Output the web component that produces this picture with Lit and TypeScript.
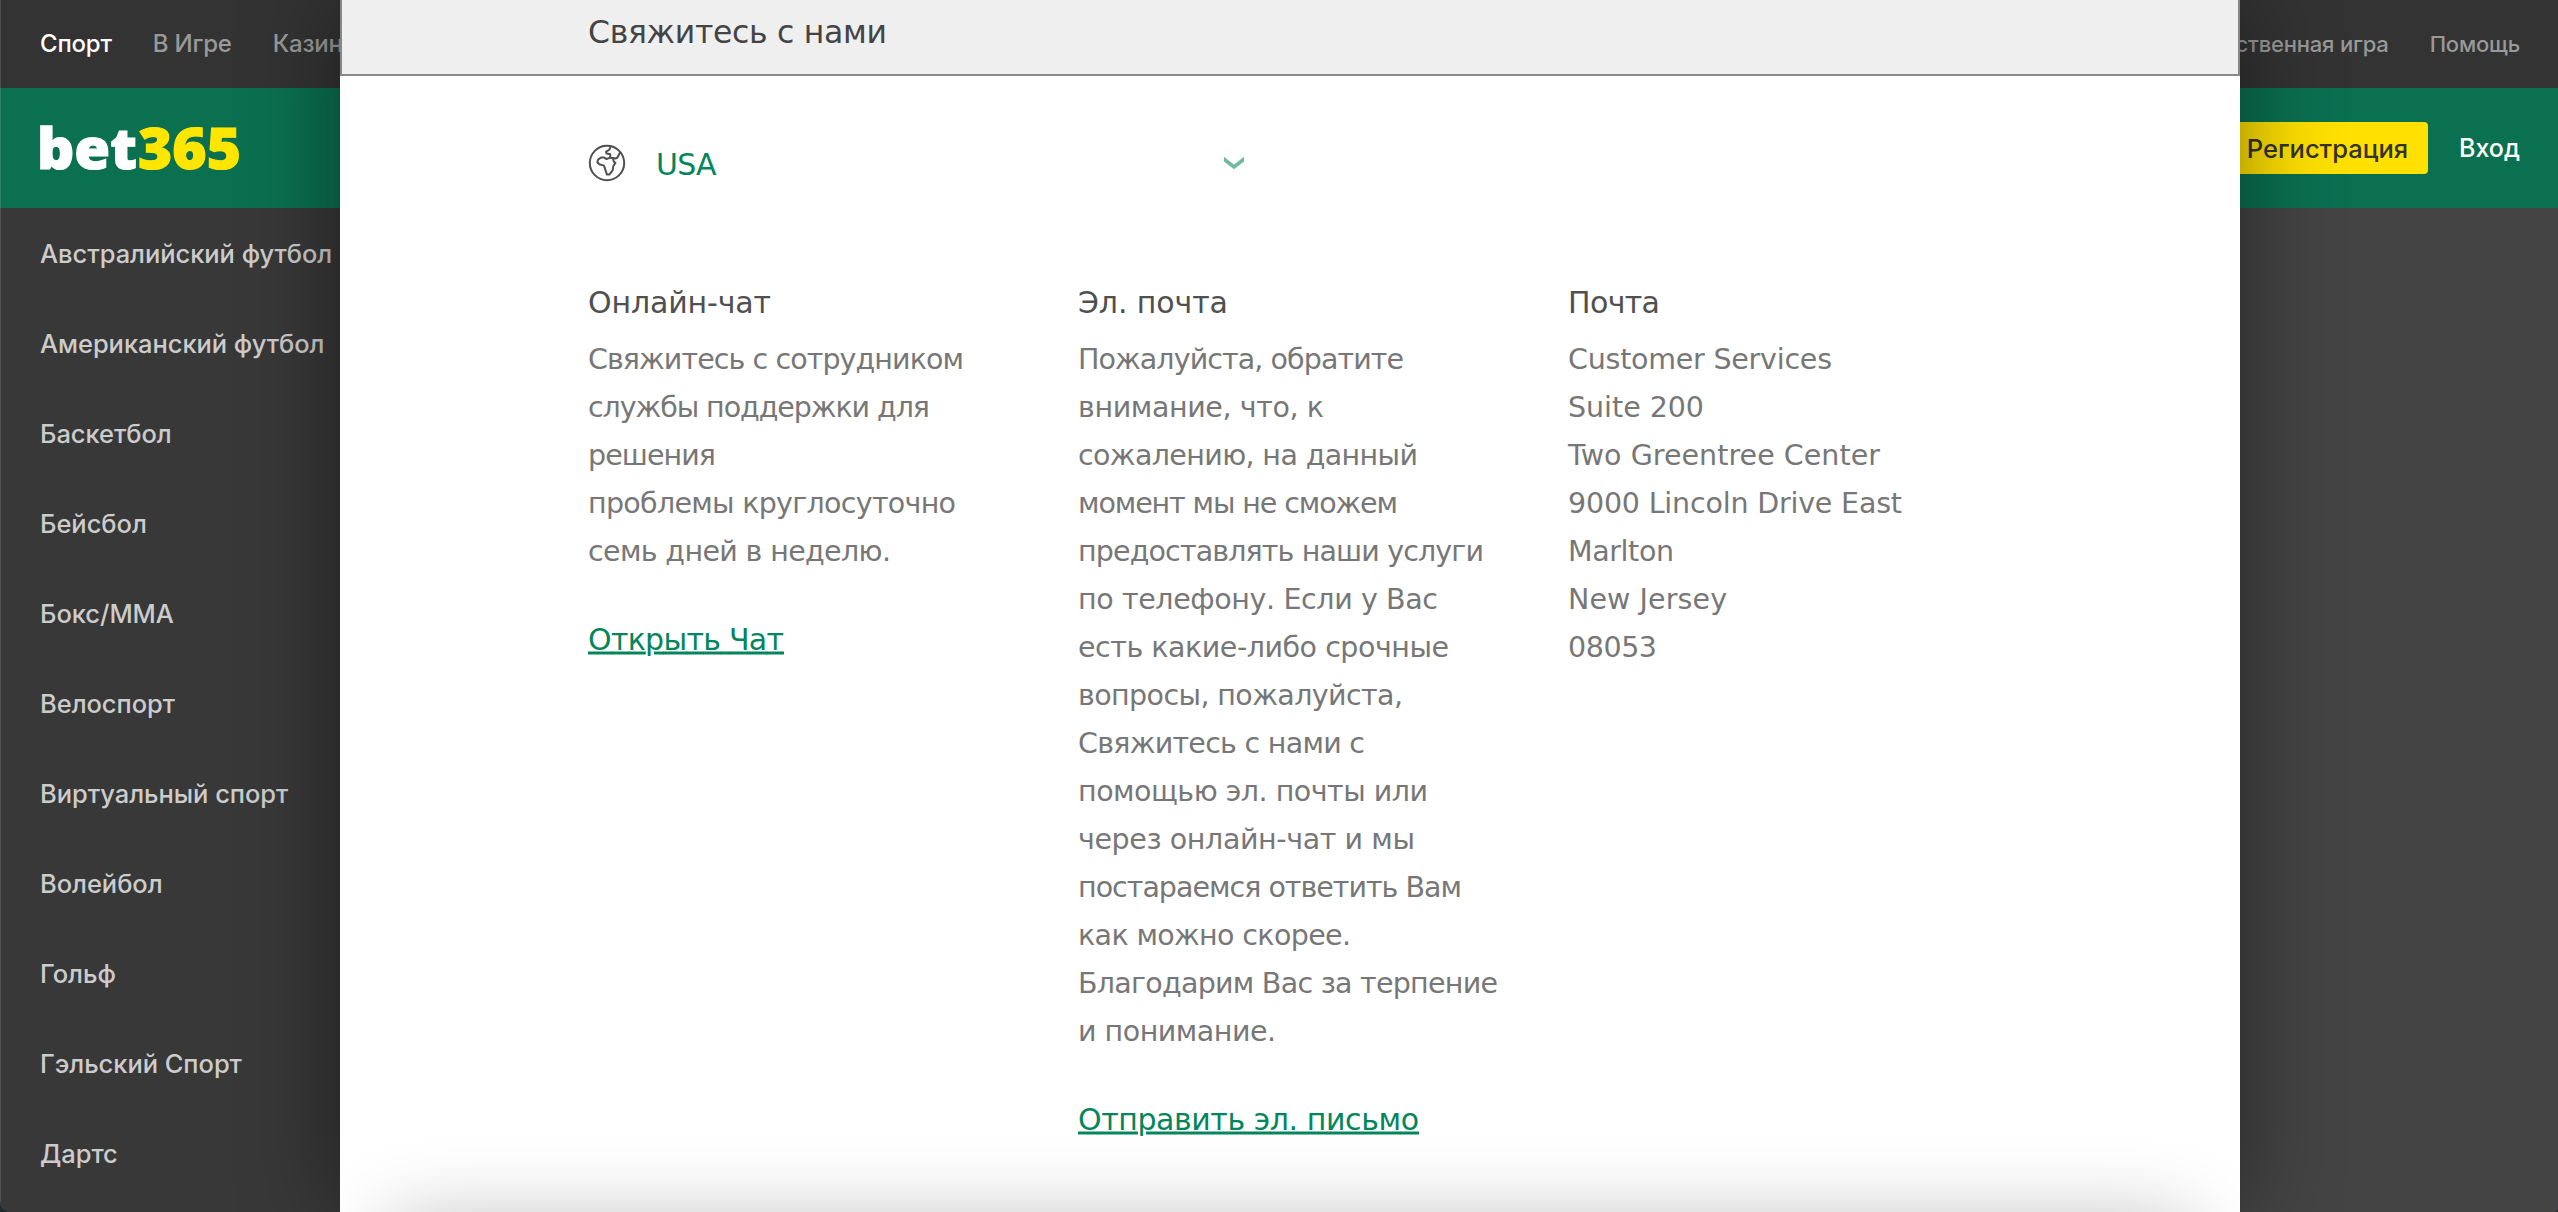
import { LitElement, html, svg, css } from "lit";
import { customElement } from "lit/decorators.js";

interface Line { text: string; width: number; }
interface Column { title: string; titleWidth: number; lines: Line[]; link?: string; linkWidth?: number; }

const l = (text: string, width: number): Line => ({ text, width });

const COLUMNS: Column[] = [
  {
    title: "Онлайн-чат", titleWidth: 183,
    lines: [
      l("Свяжитесь с сотрудником", 376), l("службы поддержки для", 342), l("решения", 128),
      l("проблемы круглосуточно", 368), l("семь дней в неделю.", 303),
    ],
    link: "Открыть Чат", linkWidth: 196,
  },
  {
    title: "Эл. почта", titleWidth: 150,
    lines: [
      l("Пожалуйста, обратите", 326), l("внимание, что, к", 246), l("сожалению, на данный", 340),
      l("момент мы не сможем", 320), l("предоставлять наши услуги", 406), l("по телефону. Если у Вас", 360),
      l("есть какие-либо срочные", 371), l("вопросы, пожалуйста,", 325), l("Свяжитесь с нами с", 287),
      l("помощью эл. почты или", 350), l("через онлайн-чат и мы", 337), l("постараемся ответить Вам", 384),
      l("как можно скорее.", 273), l("Благодарим Вас за терпение", 420), l("и понимание.", 198),
    ],
    link: "Отправить эл. письмо", linkWidth: 341,
  },
  {
    title: "Почта", titleWidth: 92,
    lines: [
      l("Customer Services", 264), l("Suite 200", 136), l("Two Greentree Center", 312),
      l("9000 Lincoln Drive East", 334), l("Marlton", 106), l("New Jersey", 159), l("08053", 89),
    ],
  },
];

const SPORTS = ["Австралийский футбол", "Американский футбол", "Баскетбол", "Бейсбол", "Бокс/ММА",
  "Велоспорт", "Виртуальный спорт", "Волейбол", "Гольф", "Гэльский Спорт", "Дартс"];

@customElement("app-root")
export class AppRoot extends LitElement {
  static styles = css`
    :host { display: block; position: relative; width: 100%; height: 1212px; overflow: hidden; background: #1d2b2b; font-family: Inter, "Noto Sans", sans-serif; }
    .page { display: flex; flex-direction: column; height: 1212px; background: #444; border-radius: 0 0 4px 10px; overflow: hidden; }
    .edge { position: absolute; left: 0; top: 0; bottom: 10px; width: 1px; background: rgba(255, 255, 255, 0.13); }
    .nav { height: 88px; flex: none; background: #333; display: flex; justify-content: space-between; align-items: center; padding: 0 38px 0 40px; color: #999; box-sizing: border-box; white-space: nowrap; }
    .tabs { display: flex; gap: 41px; font-size: 24px; letter-spacing: -0.2px; font-weight: 450; padding-bottom: 1px; }
    .active { color: #fff; font-weight: 500; }
    .help { display: flex; gap: 41px; font-size: 22px; font-weight: 450; letter-spacing: -0.2px; }
    .bar { height: 120px; flex: none; background: #0a7050; display: flex; justify-content: space-between; align-items: center; padding: 0 38px 0 40px; }
    .logo { width: 202px; height: 60px; display: block; overflow: visible; font-family: "Noto Sans", sans-serif; font-weight: 900; font-size: 56px; stroke-width: 1.2px; }
    .account { display: flex; align-items: center; gap: 31px; }
    .join { height: 52px; width: 210px; box-sizing: border-box; padding-right: 20px; border-radius: 4px; background: #ffe000; color: #333; font-size: 25.500px; font-weight: 450; display: flex; align-items: center; justify-content: flex-end; }
    .login { color: #fff; font-weight: 500; font-size: 25px; }
    .sidebar { flex: 1; width: 400px; min-height: 0; background: #383838; overflow: hidden; box-sizing: border-box; }
    .sport { height: 90px; display: flex; align-items: center; padding-left: 40px; color: #ccc; font-size: 25.500px; font-weight: 450; letter-spacing: -0.05px; white-space: nowrap; }
    .dialog { position: absolute; left: 340px; top: 0; width: 1900px; height: 1212px; background: #fff; box-shadow: 0 0 90px rgba(0, 0, 0, 0.45); font-family: "DejaVu Sans", Verdana, sans-serif; color: #505050; }
    .head { height: 76px; box-sizing: border-box; border: 2px solid #888; border-top: 0; background: #efefef; padding-left: 246px; display: flex; align-items: center; padding-bottom: 11px; font-size: 31.500px; color: #444; }
    .body { padding: 65px 170px 0 248px; }
    .country { height: 44px; display: flex; align-items: center; width: 656px; }
    .globe { width: 38px; height: 38px; margin-right: 30px; }
    .name { flex: 1; color: #05855b; font-size: 30px; padding-top: 3px; letter-spacing: -0.8px; }
    .chevron { width: 20px; height: 13px; overflow: hidden; margin-top: 1px; }
    .columns { display: grid; grid-template-columns: 490px 490px 440px; margin-top: 93px; }
    .title { height: 50px; line-height: 50px; font-size: 30px; }
    .text { margin-top: 6px; color: #777; font-size: 28.500px; }
    .line { height: 48px; line-height: 48px; white-space: nowrap; }
    .link { margin-top: 41px; height: 50px; font-size: 30px; color: #05855b; }
    svg.run { display: block; overflow: visible; height: 48px; }
    .under { text-decoration: underline; text-decoration-thickness: 2px; text-underline-offset: 3px; }
    .fade { position: absolute; left: 0; right: 0; bottom: 0; height: 80px; overflow: hidden; }
    .fade-shape { position: absolute; left: 50px; right: 50px; top: 88px; height: 80px; box-shadow: 0 0 80px rgba(0, 0, 0, 0.25); }
  `;

  private run(text: string, width: number, cls = "") {
    return html`<svg class="run" width=${width}>
      ${svg`<text class=${cls} x="0" y="34.500" fill="currentColor" textLength=${width}>${text}</text>`}
    </svg>`;
  }

  render() {
    return html`
      <div class="page">
        <div class="nav">
          <div class="tabs"><span class="active">Спорт</span><span>В Игре</span><span>Казино</span></div>
          <div class="help"><span>Ответственная игра</span><span>Помощь</span></div>
        </div>
        <div class="bar">
          <svg class="logo" viewBox="0 0 202 60">
            <text x="-3" y="50.500" fill="#fff" stroke="#fff" textLength="100" lengthAdjust="spacingAndGlyphs">bet</text>
            <text x="98" y="50.500" fill="#ffe600" stroke="#ffe600" textLength="103" lengthAdjust="spacingAndGlyphs">365</text>
          </svg>
          <div class="account"><div class="join">Регистрация</div><div class="login">Вход</div></div>
        </div>
        <div class="sidebar">${SPORTS.map((s) => html`<div class="sport">${s}</div>`)}</div>
      </div>
      <div class="edge"></div>
      <div class="dialog">
        <div class="head">${this.run("Свяжитесь с нами", 299)}</div>
        <div class="body">
          <div class="country">
            <svg class="globe" viewBox="0 0 38 38" fill="none" stroke="#505050" stroke-width="2" stroke-linejoin="round" stroke-linecap="round">
              <circle cx="19" cy="19" r="17.2"></circle>
              <path d="M22.500 2.500L21.500 5.500 18 7.800l.6 1.800 3.600.7v3.300"></path>
              <path d="M32 8.500l-2.500 5-2 1-2.500-.5"></path>
              <path d="M9.300 18.300l1-3L13 13.600h3l2.600 1.400 3.600-1.400 2.600.7L26 18l1.500.8-2.200 3.500-.7 4-3.300 4.300H19l-1.700-5-1.300-4-4.700-1.300z"></path>
            </svg>
            <div class="name">USA</div>
            <svg class="chevron" viewBox="0 0 20 13" fill="none" stroke="#70b9a0" stroke-width="3.600"><path d="M-2 .5l12 9.500 12-9.500"></path></svg>
          </div>
          <div class="columns">
            ${COLUMNS.map((c) => html`<div>
              <div class="title">${this.run(c.title, c.titleWidth)}</div>
              <div class="text">${c.lines.map((n) => html`<div class="line">${this.run(n.text, n.width)}</div>`)}</div>
              ${c.link ? html`<div class="link">${this.run(c.link, c.linkWidth ?? 0, "under")}</div>` : ""}
            </div>`)}
          </div>
        </div>
        <div class="fade"><div class="fade-shape"></div></div>
      </div>
    `;
  }
}
